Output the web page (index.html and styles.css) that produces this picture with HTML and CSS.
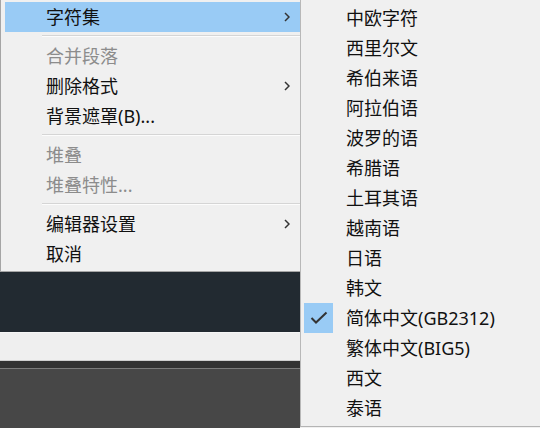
FILE: index.html
```html
<!DOCTYPE html>
<html lang="zh-CN">
<head>
    <meta charset="UTF-8">
    <title>字符集菜单</title>
    <link rel="stylesheet" href="styles.css">
</head>
<body>
    <div class="screen">
        <div class="left">
            <div class="menu">
                <div class="item active">
                    <span>字符集</span>
                    <svg class="arrow" width="6" height="10" viewBox="0 0 6 10"><polyline points="1,1 5,5 1,9" /></svg>
                </div>
                <div class="sep"></div>
                <div class="item disabled"><span>合并段落</span></div>
                <div class="item">
                    <span>删除格式</span>
                    <svg class="arrow" width="6" height="10" viewBox="0 0 6 10"><polyline points="1,1 5,5 1,9" /></svg>
                </div>
                <div class="item"><span>背景遮罩(B)...</span></div>
                <div class="sep"></div>
                <div class="item disabled"><span>堆叠</span></div>
                <div class="item disabled"><span>堆叠特性...</span></div>
                <div class="sep"></div>
                <div class="item">
                    <span>编辑器设置</span>
                    <svg class="arrow" width="6" height="10" viewBox="0 0 6 10"><polyline points="1,1 5,5 1,9" /></svg>
                </div>
                <div class="item"><span>取消</span></div>
            </div>
            <div class="panel-dark"></div>
            <div class="strip"></div>
            <div class="bar"></div>
            <div class="bottom"></div>
        </div>

        <div class="submenu">
            <div class="sub-item"><span class="check"></span><span>中欧字符</span></div>
            <div class="sub-item"><span class="check"></span><span>西里尔文</span></div>
            <div class="sub-item"><span class="check"></span><span>希伯来语</span></div>
            <div class="sub-item"><span class="check"></span><span>阿拉伯语</span></div>
            <div class="sub-item"><span class="check"></span><span>波罗的语</span></div>
            <div class="sub-item"><span class="check"></span><span>希腊语</span></div>
            <div class="sub-item"><span class="check"></span><span>土耳其语</span></div>
            <div class="sub-item"><span class="check"></span><span>越南语</span></div>
            <div class="sub-item"><span class="check"></span><span>日语</span></div>
            <div class="sub-item"><span class="check"></span><span>韩文</span></div>
            <div class="sub-item">
                <span class="check on">
                    <svg width="18" height="14" viewBox="0 0 18 14"><polyline points="1.5,7 6,11.5 16.5,1.5" /></svg>
                </span>
                <span>简体中文(GB2312)</span>
            </div>
            <div class="sub-item"><span class="check"></span><span>繁体中文(BIG5)</span></div>
            <div class="sub-item"><span class="check"></span><span>西文</span></div>
            <div class="sub-item"><span class="check"></span><span>泰语</span></div>
        </div>
    </div>
</body>
</html>
```

FILE: styles.css
```css
* {
    box-sizing: border-box;
    margin: 0;
    padding: 0;
}
body {
    width: 540px;
    height: 428px;
    overflow: hidden;
    background: #f0f0f0;
    font-family: "Noto Sans", "Noto Sans CJK SC", sans-serif;
    font-size: 18px;
    color: #111;
}
.screen {
    display: flex;
    height: 428px;
}

/* left context menu and the app behind it */
.left {
    width: 300px;
    display: flex;
    flex-direction: column;
}
.menu {
    background: #f0f0f0;
    border-left: 1px solid #a5a5a5;
    border-bottom: 1px solid #a5a5a5;
    padding: 2px 0 2px 4px;
}
.item {
    height: 30px;
    line-height: 30px;
    padding-left: 41px;
    padding-right: 10px;
    display: flex;
    align-items: center;
    justify-content: space-between;
}
.item.active {
    background: #99cbf5;
}
.item.disabled {
    color: #8c8c8c;
}
.arrow polyline {
    fill: none;
    stroke: #333;
    stroke-width: 1.5;
}
.sep {
    height: 9px;
    margin-left: 37px;
    padding-top: 3px;
}
.sep::before {
    content: "";
    display: block;
    height: 1px;
    background: #d5d5d5;
    border-bottom: 1px solid #fcfcfc;
    box-sizing: content-box;
}
.panel-dark {
    height: 60px;
    background: #222a31;
}
.strip {
    height: 29px;
    background: #efefef;
    border-top: 1px solid #f6f6f6;
    border-bottom: 1px solid #cfcfcf;
}
.bar {
    height: 7px;
    background: #333333;
    border-bottom: 1px solid #7c7c7c;
    box-sizing: content-box;
}
.bottom {
    flex: 1;
    background: #474747;
}

/* character set submenu */
.submenu {
    width: 240px;
    height: 427px;
    background: #f0f0f0;
    border-left: 1px solid #b8b8b8;
    border-bottom: 1px solid #b4b4b4;
    padding: 3px 0 3px 3px;
}
.sub-item {
    height: 30px;
    line-height: 30px;
    display: flex;
    align-items: center;
}
.check {
    width: 29px;
    height: 30px;
    margin-right: 13px;
    display: flex;
    align-items: center;
    justify-content: center;
}
.check.on {
    background: #99cbf5;
}
.check polyline {
    fill: none;
    stroke: #333;
    stroke-width: 2;
}
```
